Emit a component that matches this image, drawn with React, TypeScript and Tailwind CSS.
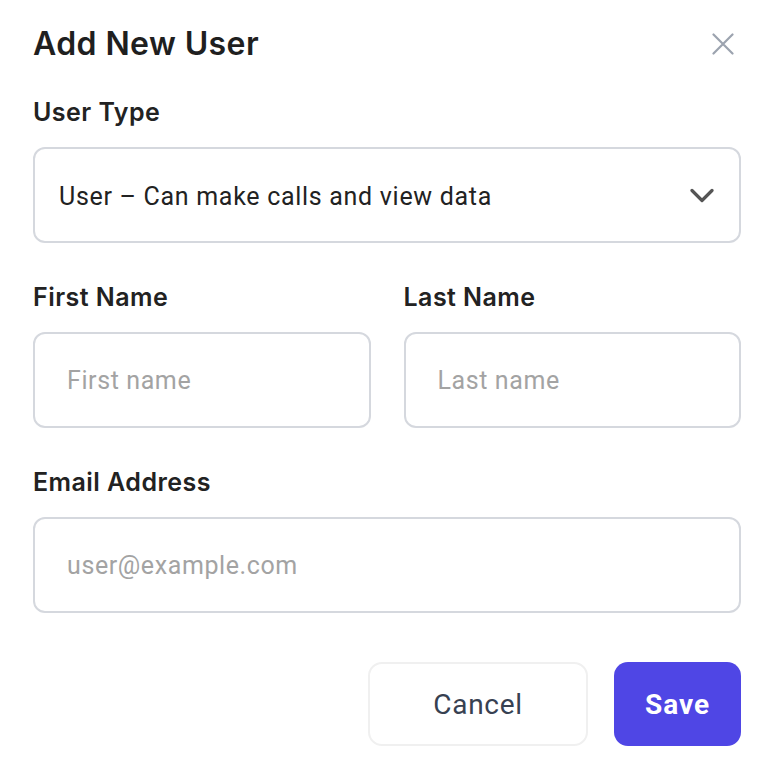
import React from "react";

const LABEL =
  "block pt-px text-[25px] leading-[32px] font-semibold tracking-[0.45px] text-[#222222] mb-[19px] font-['Inter',sans-serif]";
const FIELD =
  "w-full h-[96px] rounded-[12px] border-2 border-[#d5d8de] bg-white px-8 text-[25px] tracking-[0.6px] text-[#222] outline-none placeholder:text-[#a3a3a3] font-['Roboto',sans-serif]";

export default function App() {
  return (
    <div className="min-h-screen w-full bg-white pl-[33px] pr-[31px] pt-[23px] pb-4">
      {/* header */}
      <div className="flex items-center justify-between">
        <h2 className="pt-px text-[32px] leading-[40px] font-semibold tracking-[0.4px] text-[#1f1f1f] font-['Inter',sans-serif]">
          Add New User
        </h2>
        <button type="button" aria-label="Close" className="mr-[6px] flex h-[24px] w-[24px] items-center justify-center">
          <svg width="22" height="22" viewBox="0 0 22 22" fill="none" stroke="#9ca3af" strokeWidth="2.2" strokeLinecap="round">
            <path d="M1.5 1.5 20.5 20.5M20.5 1.5 1.5 20.5" />
          </svg>
        </button>
      </div>

      {/* user type */}
      <div className="mt-[31px]">
        <label className={LABEL}>User Type</label>
        <div className="flex h-[96px] w-full items-center justify-between rounded-[12px] border-2 border-[#d5d8de] pl-6 pr-[25px]">
          <span className="pt-[3px] text-[25px] tracking-[0.7px] text-[#222] font-['Roboto',sans-serif]">
            User – Can make calls and view data
          </span>
          <svg width="24" height="15" viewBox="0 0 24 15" fill="none" stroke="#555555" strokeWidth="3.2" strokeLinecap="round" strokeLinejoin="round">
            <path d="M2 2.5 12 12.5 22 2.5" />
          </svg>
        </div>
      </div>

      {/* names */}
      <div className="mt-[37px] grid grid-cols-2 gap-[33px]">
        <div>
          <label className={LABEL}>First Name</label>
          <input className={FIELD} placeholder="First name" />
        </div>
        <div>
          <label className={LABEL}>Last Name</label>
          <input className={FIELD} placeholder="Last name" />
        </div>
      </div>

      {/* email */}
      <div className="mt-[37px]">
        <label className={LABEL}>Email Address</label>
        <input className={FIELD} placeholder="user@example.com" />
      </div>

      {/* actions */}
      <div className="mt-[49px] flex justify-end gap-[25px]">
        <button
          type="button"
          className="h-[84px] w-[220px] rounded-[14px] border-2 border-[#f0f0f0] bg-white pt-px text-[28px] tracking-[0.7px] text-[#374151] font-['Roboto',sans-serif]"
        >
          Cancel
        </button>
        <button
          type="button"
          className="ml-[1px] h-[84px] w-[127px] rounded-[14px] bg-[#4f46e5] pt-px text-[28px] font-bold tracking-[1px] text-white font-['Roboto',sans-serif]"
        >
          Save
        </button>
      </div>
    </div>
  );
}
